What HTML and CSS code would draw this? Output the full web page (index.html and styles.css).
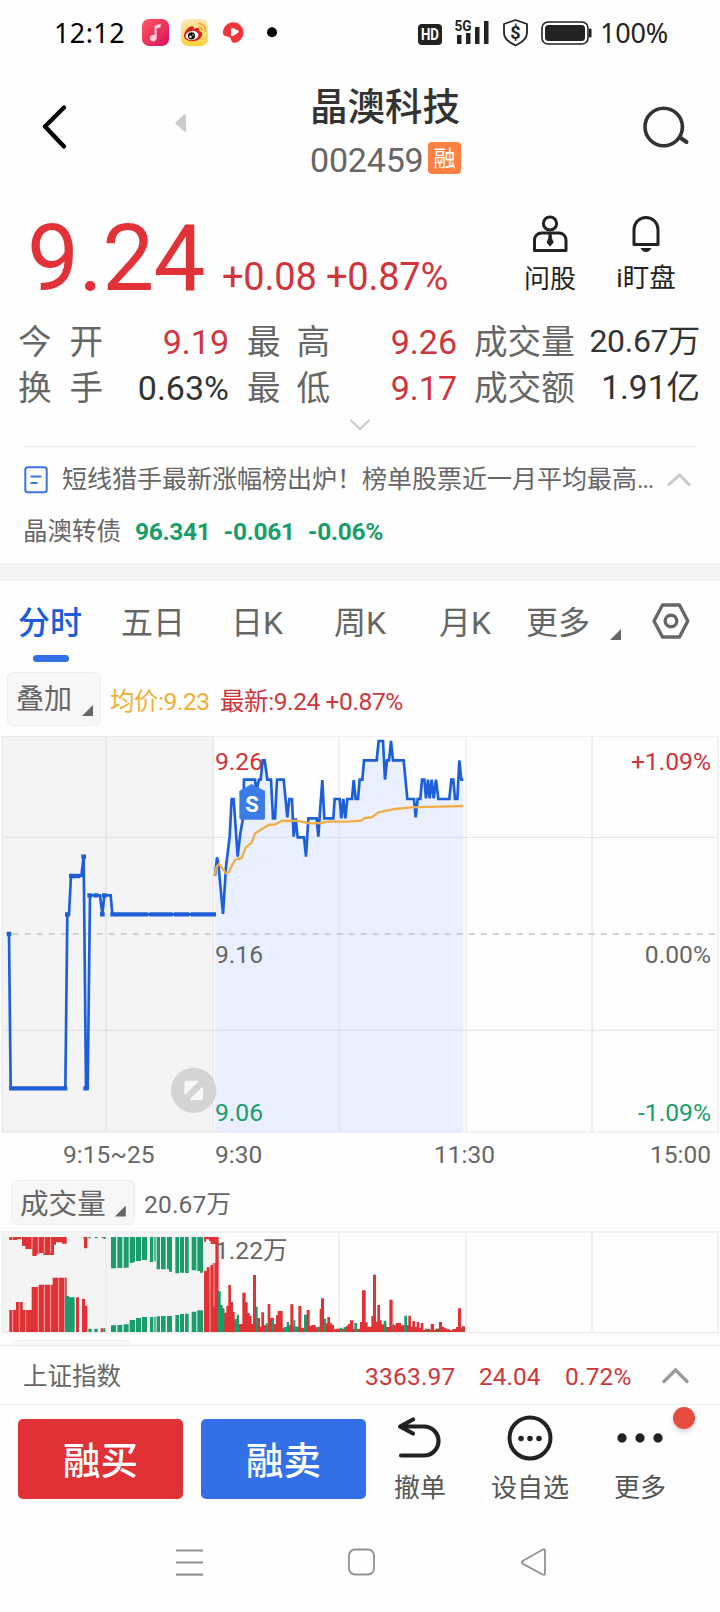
FILE: index.html
```html
<!DOCTYPE html>
<html lang="zh-CN">
<head>
<meta charset="utf-8">
<title>晶澳科技 002459</title>
<link rel="stylesheet" href="styles.css">
</head>
<body>
<div class="statusbar">
  <span class="clock">12:12</span>
  <svg class="app-icons" width="140" height="28" viewBox="0 0 140 28">
    <defs>
      <linearGradient id="pink" x1="0" y1="0" x2="1" y2="1"><stop offset="0" stop-color="#ff5a5f"/><stop offset="1" stop-color="#d80f5c"/></linearGradient>
      <linearGradient id="gold" x1="0" y1="0" x2="0" y2="1"><stop offset="0" stop-color="#fbe7b4"/><stop offset="1" stop-color="#ffd23a"/></linearGradient>
    </defs>
    <rect x="0" y="0" width="27" height="27" rx="7" fill="url(#pink)"/>
    <path d="M12.6 6.8l6-2v3.4l-4 1.4v9.5a3.3 3.3 0 1 1-2-3z" fill="#ffd3dc"/>
    <rect x="39" y="0" width="27" height="27" rx="7" fill="url(#gold)"/>
    <path d="M42 16c1-5 6-9.500 9-8.500 1.400.5.8 2 .7 2.500 3-1.500 6.500-1.400 5.500 2 3.500 1 3.500 3.500 2 6-2 3.200-6 4.500-9.800 4.200C45 21.800 41.500 20 42 16z" fill="#dc1f1b"/>
    <ellipse cx="50" cy="16.500" rx="6.500" ry="4.600" fill="#fff" transform="rotate(-8 50 16.500)"/>
    <circle cx="49.500" cy="16.800" r="3.600" fill="#111"/><circle cx="48.500" cy="17.800" r="1.200" fill="#fff"/><circle cx="51" cy="16" r=".7" fill="#fff"/>
    <path d="M57 4.500a7 7 0 0 1 6.500 7.500M57.500 8a3.600 3.600 0 0 1 2.700 3.300" fill="none" stroke="#f19a25" stroke-width="1.600" stroke-linecap="round"/>
    <path d="M81 14.500A10.300 10.300 0 1 1 96.500 22.400Q93 24.500 91 23.500C88.800 22.500 89.500 19.500 87.500 18.300 85 17 81.500 17.500 81 14.500z" fill="#f5333b"/>
    <path d="M89 10.500q0-2 2-1.500l5 2.500q1.500 1 0 2.200l-5 3.300q-2 1-2-1z" fill="#fff"/>
    <circle cx="130" cy="13.300" r="5" fill="#000"/>
  </svg>
  <svg class="sys-icons" width="178" height="30" viewBox="0 0 178 30">
    <rect x="0" y="6" width="24" height="21" rx="4" fill="#222"/>
    <text x="3" y="21.800" class="hd" textLength="18" lengthAdjust="spacingAndGlyphs">HD</text>
    <text x="36.500" y="13" class="fiveg" textLength="17" lengthAdjust="spacingAndGlyphs">5G</text>
    <path d="M39 17h4.500v9H39zM48 15h4.500v11H48zM57 9h4.500v17H57zM66 3h4.500v23H66z" fill="#222"/>
    <path d="M97.500 2l11.500 4v9c0 6-5 9.500-11.500 12.500C91 24.500 86 21 86 15V6z" fill="none" stroke="#222" stroke-width="1.800" stroke-linejoin="round"/>
    <text x="97.500" y="20.500" text-anchor="middle" class="dollar">$</text>
    <rect x="124" y="4" width="46" height="22" rx="6" fill="none" stroke="#222" stroke-width="1.600"/>
    <rect x="127" y="7" width="40" height="16" rx="3.500" fill="#222"/>
    <path d="M171.500 11h1.500v8h-1.500z" fill="#222" stroke="#222"/>
  </svg>
  <span class="battery">100%</span>
</div>

<header class="header">
  <svg class="back" width="30" height="50" viewBox="0 0 30 50"><path d="M24 5.500L5 24.500l19 20" fill="none" stroke="#000" stroke-width="4.400" stroke-linecap="round" stroke-linejoin="round"/></svg>
  <svg class="prev" width="12" height="18" viewBox="0 0 12 18"><path d="M0 9L9 .5Q11 0 11 2v14q0 2-2 1.500z" fill="#ccc"/></svg>
  <div class="title">
    <h1>晶澳科技</h1>
    <div class="code"><span>002459</span><b>融</b></div>
  </div>
  <svg class="search" width="48" height="48" viewBox="0 0 48 48"><circle cx="21.700" cy="23" r="18.700" fill="none" stroke="#333" stroke-width="3.600"/><path d="M38 33.500l6.500 4.500" stroke="#333" stroke-width="4" stroke-linecap="round"/></svg>
</header>

<section class="quote">
  <div class="price">9.24</div>
  <div class="change">+0.08 +0.87%</div>
  <div class="tool ask">
    <svg width="36" height="40" viewBox="0 0 36 40" fill="none" stroke="#222" stroke-width="3"><circle cx="18" cy="9.500" r="6.600"/><path d="M2.500 36.500V26a7 7 0 0 1 7-7H27a7 7 0 0 1 7 7v10.500z" stroke-linejoin="round"/><path d="M16.500 20h3.200l.2 4 1.800 4.500L18 32.500 14.600 28.500l1.700-4.500z" fill="#222" stroke="none"/></svg>
    <span>问股</span>
  </div>
  <div class="tool watch">
    <svg width="36" height="40" viewBox="0 0 36 40" fill="none" stroke="#222" stroke-width="3"><path d="M6 30.500V15.500a12 12 0 0 1 24 0v15z" stroke-linejoin="round"/><path d="M12.500 34h11q-2 4-5.500 4t-5.500-4z" fill="#222" stroke="none"/></svg>
    <span>i盯盘</span>
  </div>
</section>

<section class="stats">
  <div class="row">
    <div class="cell c1"><span class="lab sp">今开</span><span class="up">9.19</span></div>
    <div class="cell c2"><span class="lab sq">最高</span><span class="up">9.26</span></div>
    <div class="cell c3"><span class="lab">成交量</span><span class="small">20.67万</span></div>
  </div>
  <div class="row">
    <div class="cell c1"><span class="lab sp">换手</span><span>0.63%</span></div>
    <div class="cell c2"><span class="lab sq">最低</span><span class="up">9.17</span></div>
    <div class="cell c3"><span class="lab">成交额</span><span class="amount">1.91亿</span></div>
  </div>
  <svg class="expand" width="24" height="14" viewBox="0 0 24 14"><path d="M2.500 2L12 11l9.500-9" fill="none" stroke="#c8c8c8" stroke-width="2"/></svg>
</section>

<section class="news">
  <svg width="24" height="28" viewBox="0 0 24 28" fill="none" stroke="#3b74de" stroke-width="2"><rect x="1.300" y="1.300" width="21.400" height="25" rx="2.500"/><path d="M6.500 10.500h11M6.500 17h7"/></svg>
  <span class="headline">短线猎手最新涨幅榜出炉！榜单股票近一月平均最高<span class="dots">...</span></span>
  <svg class="fold" width="24" height="14" viewBox="0 0 24 14"><path d="M2 11.500L12.500 2 22 11.500" fill="none" stroke="#c8c8c8" stroke-width="3" stroke-linecap="round"/></svg>
</section>
<section class="bond"><span class="name">晶澳转债</span><b>96.341</b><b>-0.061</b><b>-0.06%</b></section>
<div class="band"></div>

<nav class="tabs">
  <span class="tab t1 active">分时</span><span class="tab t2">五日</span><span class="tab t3">日K</span><span class="tab t4">周K</span><span class="tab t5">月K</span><span class="tab t6">更多</span>
  <i class="corner"></i>
  <svg class="gear" width="40" height="38" viewBox="0 0 40 38" fill="none" stroke="#666" stroke-width="3.400"><path d="M11.500 3h17l8.300 16-8.300 16h-17L3 19z" stroke-linejoin="round"/><circle cx="20" cy="19" r="5.800"/></svg>
</nav>

<div class="legend">
  <span class="picker overlay">叠加<i class="corner"></i></span>
  <span class="avg">均价:9.23</span>
  <span class="last">最新:9.24 +0.87%</span>
</div>

<svg class="chart" width="720" height="400" viewBox="0 0 2160 1200">
  <path d="M7 0H640V1188H7z" fill="#f4f4f4"/>
  <path d="M645 1188V420L651 364 655 382 669 534 678 392 689 302 695 189H701L713 362 721 292 729 247 732 131H765L770 172 773 147 777 131H782L788 73H794L802 131H813L819 247H825L831 131H851L862 244 868 189H876L881 302 887 247 893 304H912L918 362 925 247H950L955 302 961 212 967 132 973 247H1000L1004 189H1019L1024 247 1030 189 1036 247 1042 189H1056L1061 132 1067 189H1074L1079 131H1087L1092 73H1130L1136 15H1149L1155 131 1161 73H1167L1173 15 1179 73H1211L1222 189H1242L1247 244 1253 189H1261L1266 131H1273L1278 187 1284 131 1289 187 1295 131 1301 187 1308 131 1315 189H1348L1354 131H1360L1365 189H1372L1378 73 1384 131H1390V1188z" fill="#eaf0ff"/>
  <path d="M7 0H2154V1188H7zM318 0V1188M640 0V1188M1017 0V1188M1398 0V1188M1776 0V1188" fill="none" stroke="#c6cbd2" stroke-opacity=".3" stroke-width="5"/>
  <path d="M12 304H2150M12 883H2150" stroke="#c6cbd2" stroke-opacity=".5" stroke-width="3"/>
  <path d="M38 594H2150" stroke="#c2c4ca" stroke-width="5" stroke-dasharray="18 18"/>
  <text x="645" y="102" class="axis up">9.26</text>
  <text x="645" y="680" class="axis">9.16</text>
  <text x="645" y="1154" class="axis down">9.06</text>
  <text x="2133" y="102" class="axis up" text-anchor="end">+1.09%</text>
  <text x="2133" y="680" class="axis" text-anchor="end">0.00%</text>
  <text x="2133" y="1154" class="axis down" text-anchor="end">-1.09%</text>
  <g fill="none" stroke="#1c5fd9" stroke-width="8">
    <path d="M27 594L32 1057H196L202 535H207L213 420H244L251 362 258 1057H263L270 478H300L307 535 313 478H332L337 535H648"/>
    <path d="M20 594H34M28 1057H202M195 535H210M207 420H240M244 362H258M250 1057H266M262 478H276M281 478H295M300 535H314M306 478H320M331 535H444M448 535H518M522 535H568M572 535H648" stroke-width="13"/>
    <path d="M645 420L651 364 655 382 669 534 678 392 689 302 695 189H701L713 362 721 292 729 247 732 131H765L770 172 773 147 777 131H782L788 73H794L802 131H813L819 247H825L831 131H851L862 244 868 189H876L881 302 887 247 893 304H912L918 362 925 247H950L955 302 961 212 967 132 973 247H1000L1004 189H1019L1024 247 1030 189 1036 247 1042 189H1056L1061 132 1067 189H1074L1079 131H1087L1092 73H1130L1136 15H1149L1155 131 1161 73H1167L1173 15 1179 73H1211L1222 189H1242L1247 244 1253 189H1261L1266 131H1273L1278 187 1284 131 1289 187 1295 131 1301 187 1308 131 1315 189H1348L1354 131H1360L1365 189H1372L1378 73 1384 131H1390"/>
  </g>
  <path d="M643 420L650 392 657 384 667 397 678 412 687 407 695 390 705 372 713 369 725 366 737 334 755 320 765 292 785 280 805 267 825 265 845 255 885 254 910 258 930 262 960 261 985 257H1045L1083 254 1095 246 1115 244 1135 229 1160 224 1185 219 1235 214 1315 212 1390 210" fill="none" stroke="#f0ae48" stroke-width="7" stroke-linejoin="round"/>
  <path d="M718 165L755 144 795 165V245Q795 251 789 251H724Q718 251 718 245z" fill="#3d7ce6"/>
  <text x="756" y="228" class="sell" text-anchor="middle">S</text>
  <circle cx="581" cy="1063" r="68" fill="#d4d4d4"/>
  <path d="M558 1036H593L555 1073V1039Q555 1036 558 1036zM607 1055V1087Q607 1091 603 1091H571z" fill="#f8f8f8" stroke="#f8f8f8" stroke-width="4" stroke-linejoin="round"/>
</svg>

<div class="times"><span class="h1">9:15~25</span><span class="h2">9:30</span><span class="h3">11:30</span><span class="h4">15:00</span></div>

<div class="volhead"><span class="picker volume">成交量<i class="corner"></i></span><span class="total">20.67万</span></div>

<svg class="vol" width="720" height="105" viewBox="0 270 2160 315">
  <path d="M7 276H640V578H7z" fill="#f4f4f4"/>
  <path d="M7 276H2154V578H7zM318 276V578M640 276V578M1017 276V578M1398 276V578M1776 276V578" fill="none" stroke="#eee" stroke-width="5"/>
  <path d="M28 576V510H48V486H68V510H95V441H116V434H158V413H200V576zM228 576V472H237V576zM246 576V477H255V497H262V576zM302 576V565H310V576zM612 576V392H620V382H631V375H638V370H646V291H656V576zM28 291V300H52V297H64V291zM66 291V318H76V327H95V291zM97 291V348H110V343H118V339H130V345H162V314H168V307H186V311H200V291zM250 291V296H252V325H262V291zM305 291V294H310V291zM612 291V305H618V298H627V303H632V312H646V291z" fill="#e03135"/>
  <path transform="translate(600 0)" fill="#e03135" d="M54 576V505H73V518H79V497H85V435H93V486H99V516H104V540H117V552H127V458H137V487H143V519H149V527H155V552H159V405H168V534H180V560H184V517H192V556H203V492H211V534H222V552H228V526H233V513H248V563H267V555H271V493H280V560H295V498H304V563H316V524H320V510H329V558H334V555H347V562H359V506H363V475H372V550H382V531H390V548H395V554H402V568H408V566H438V557H444V552H450V541H460V566H480V546H486V451H497V547H503V560H514V528H519V404H528V545H532V495H540V541H545V553H559V561H568V479H578V556H587V549H603V556H625V527H633V560H637V543H645V560H650V546H658V563H662V549H670V570H692V552H702V570H710V566H717V546H726V560H733V565H740V568H750V571H757V567H768V561H774V505H783V565H786V559H795V576z"/>
  <path fill="#189d6b" d="M198 576V468H207V472H224V576zM265 576V566H275V576zM283 576V566H293V576zM310 576V565H316V576zM265 291V295H272V291zM284 291V295H293V291zM310 291V297H317V291zM333 291V385H348V291zM352 291V384H367V291zM371 291V383H386V291zM389 291V369H400V366H405V291zM408 291V363H423V291zM426 291V360H441V291zM450 291V366H460V291zM463 291V364H467V291zM470 291V388H480V291zM483 291V388H497V291zM501 291V388H507V395H516V291zM526 291V400H537V291zM540 291V398H552V291zM555 291V399H566V291zM575 291V391H589V291zM592 291V393H600V398H609V291zM333 576V556H348V576zM352 576V555H367V576zM371 576V553H386V576zM389 576V540H405V576zM408 576V534H423V576zM426 576V531H441V576zM450 576V531H460V576zM463 576V530H467V576zM470 576V529H480V576zM483 576V528H497V576zM501 576V528H516V576zM526 576V525H537V576zM540 576V522H552V576zM555 576V521H566V576zM575 576V515H589V576zM592 576V511H609V576z"/>
  <path transform="translate(600 0)" fill="#189d6b" d="M54 576V453H62V495H68V505H73V576zM104 576V537H110V524H117V576zM168 576V500H173V576zM197 576V550H203V576zM216 576V540H222V576zM252 576V561H260V546H267V576zM280 576V541H286V560H295V576zM312 576V524H320V576zM353 576V560H359V576zM372 576V536H378V576zM420 576V563H426V576zM431 576V561H438V576zM463 576V549H471V576zM551 576V542H559V576zM578 576V551H582V576zM613 576V527H621V576zM783 576V564H787V576z"/>
  <path d="M675 566h15v10h-15zM706 566h12v10h-12z" fill="#8a5a3b" transform="translate(600 0)"/>
  <path d="M38 291V300M38 511V576M58 487V576M77 511V576M115 291V345M115 440V576M133 291V340M133 435V576M152 291V340M152 435V576M176 415V576M194 415V576M630 382V576M642 372V500" stroke="#f7a9aa" stroke-width="3"/>
  <text x="645" y="357" class="axis">1.22万</text>
</svg>

<div class="peek"><span></span></div>

<section class="index">
  <span class="name">上证指数</span><span class="n1">3363.97</span><span class="n2">24.04</span><span class="n3">0.72%</span>
  <svg width="30" height="18" viewBox="0 0 30 18"><path d="M3 14.500L14.500 3 26 14.500" fill="none" stroke="#999" stroke-width="3.400" stroke-linecap="round"/></svg>
</section>

<footer class="actions">
  <button class="buy">融买</button>
  <button class="sellbtn">融卖</button>
  <div class="act undo">
    <svg width="48" height="48" viewBox="0 0 48 48" fill="none" stroke="#222" stroke-width="4.200" stroke-linecap="round" stroke-linejoin="round"><path d="M17 4.500L4 11.500l13 7M5 11.500h23a14.500 14.500 0 0 1 0 29H5"/></svg>
    <span>撤单</span>
  </div>
  <div class="act fav">
    <svg width="48" height="48" viewBox="0 0 48 48"><circle cx="24" cy="23" r="20.500" fill="none" stroke="#222" stroke-width="4"/><path d="M15 23.500h.01M24 23.500h.01M33 23.500h.01" stroke="#222" stroke-width="5.600" stroke-linecap="round"/></svg>
    <span>设自选</span>
  </div>
  <div class="act more">
    <svg width="48" height="48" viewBox="0 0 48 48"><path d="M6 23h.01M24 23h.01M42 23h.01" stroke="#222" stroke-width="9.300" stroke-linecap="round"/></svg>
    <span>更多</span><i class="dot"></i>
  </div>
</footer>

<div class="sysnav">
  <svg width="720" height="40" viewBox="0 0 720 40" fill="none" stroke="#929292" stroke-width="2.200"><path d="M176 8.500h27M176 20.500h27M176 32.700h27"/><rect x="349" y="7.500" width="25" height="25" rx="6" stroke-width="1.800"/><path d="M543 7.500l-20 11.200q-2.500 1.600 0 3.200L542.500 32.500q2.500 1 2.500-1.500V9.500q0-3-2-2z" stroke-width="1.800" stroke-linejoin="round"/></svg>
</div>
</body>
</html>
```

FILE: styles.css
```css
* { box-sizing: border-box; }
body {
  margin: 0; width: 720px; height: 1612px; overflow: hidden;
  background: #fefefe; color: #333;
  font-family: Roboto, "Noto Sans CJK SC", sans-serif;
}
svg { display: block; flex: none; }
span, b, h1 { white-space: nowrap; }

.statusbar { height: 66px; display: flex; align-items: center; padding-left: 54px; font: 27px/30px "Noto Sans", sans-serif; color: #111; }
.clock { width: 88px; color: #000; letter-spacing: .4px; }
.app-icons { width: 140px; }
.sys-icons { margin-left: 136px; }
.battery { margin-left: 4px; color: #222; letter-spacing: -.2px; }
.hd { font: bold 17px Roboto, sans-serif; fill: #fff; }
.fiveg { font: bold 15px Roboto, sans-serif; fill: #222; }
.dollar { font: bold 18px Roboto, sans-serif; fill: #222; }

.header { height: 124px; display: flex; align-items: flex-start; }
.back { margin: 36px 0 0 40px; }
.prev { margin: 48px 0 0 105px; }
.title { margin-left: 123px; width: 200px; }
h1 { margin: 19px 0 0 0; font-size: 37.500px; line-height: 44px; font-weight: 500; color: #333; }
.code { display: flex; align-items: center; height: 44px; margin-top: 9px; font-size: 34px; line-height: 44px; color: #666; }
.code span { width: 118px; letter-spacing: -.2px; }
.code b { width: 33px; height: 32px; margin-top: -5px; border-radius: 4px; background: #ff8040; color: #fff; font-size: 22px; line-height: 34px; font-weight: 400; text-align: center; }
.search { margin: 38px 0 0 132px; }

.quote { height: 124px; display: flex; align-items: flex-start; color: #e03237; }
.price { width: 195px; margin-left: 27px; font-size: 92.500px; line-height: 100px; padding-top: 19px; letter-spacing: -.6px; }
.change { width: 290px; font-size: 38px; line-height: 44px; padding-top: 65px; color: #cf353b; letter-spacing: -.2px; }
.tool { width: 80px; margin-top: 24px; display: flex; flex-direction: column; align-items: center; color: #222; font-size: 26px; line-height: 32px; gap: 9px; }
.ask { margin-left: -2px; }
.watch { margin-left: 16px; gap: 8px; font-size: 26.500px; }

.stats { height: 132px; padding: 5px 20px 0 18px; }
.row { display: flex; gap: 18px; height: 46px; align-items: center; font-size: 34px; line-height: 46px; }
.cell { display: flex; justify-content: space-between; }
.c1 { width: 211px; } .c2 { width: 210px; } .c3 { width: 225px; }
.lab { color: #666; font-size: 33.600px; padding-top: 1px; margin-bottom: -1px; }
.c3 .lab { margin-left: -1px; }
.sp { letter-spacing: 18px; } .sq { letter-spacing: 16px; }
.lab.sp, .lab.sq { margin-right: -18px; }
.up { color: #cf353b; }
.small { font-size: 32px; letter-spacing: -.3px; margin-top: -1px; }
.amount { font-size: 33.500px; }
.expand { margin: 7px auto 0 330px; }

.news { height: 66px; margin: 0 23px; border-top: 1px solid #ececec; display: flex; align-items: center; color: #666; font-size: 25px; line-height: 32px; padding-left: 1px; }
.headline { width: 592px; margin-left: 14px; padding-top: 1px; }
.dots { letter-spacing: -1.200px; }
.fold { margin-left: 13px; }
.bond { height: 51px; padding-left: 23px; display: flex; align-items: center; color: #189d6b; font-size: 24.500px; line-height: 32px; padding-bottom: 11px; }
.bond .name { color: #666; width: 112px; }
.bond b { font-weight: 700; letter-spacing: -.3px; margin-right: 13px; }
.band { height: 18px; background: #f4f4f4; }

.tabs { height: 91px; display: flex; font-size: 32px; line-height: 44px; color: #666; padding: 20px 0 0 18px; }
.tab { display: block; }
.active { color: #1c5cd8; font-weight: 500; position: relative; height: 61px; }
.active::after { content: ""; position: absolute; left: 15px; top: 54px; width: 36px; height: 7px; border-radius: 4px; background: #3470e6; }
.t1 { width: 103px; } .t2 { width: 110px; } .t3 { width: 103px; } .t4 { width: 105px; } .t5 { width: 87px; } .t6 { width: 84px; }
.corner { display: block; width: 11px; height: 11px; background: #666; clip-path: polygon(100% 0, 100% 100%, 0 100%); }
.tabs .corner { margin-top: 28px; }
.gear { margin: 1px 0 0 30px; }

.legend { height: 58px; display: flex; align-items: center; padding: 0 0 4px 7px; font-size: 24.500px; line-height: 34px; }
.picker { display: flex; align-items: center; background: #f7f7f7; border: 1px solid #eee; border-radius: 6px; color: #666; }
.overlay { width: 94px; height: 54px; padding: 2px 0 0 8px; font-size: 28px; }
.overlay .corner { margin: 21px 0 0 10px; }
.avg { margin-left: 9px; width: 110px; color: #f0ae35; padding-top: 5px; letter-spacing: -.45px; }
.last { color: #cf353b; padding-top: 5px; letter-spacing: -.4px; }

.chart { margin-top: 6px; }
.axis { font: 74px Roboto, "Noto Sans CJK SC", sans-serif; fill: #666; }
.axis.up { fill: #cf353b; } .axis.down { fill: #189d6b; }
.sell { font: bold 66px Roboto, sans-serif; fill: #fff; }

.times { height: 43px; display: flex; font-size: 24.500px; line-height: 37px; color: #666; }
.h1 { margin-left: 63px; width: 152px; } .h2 { width: 219px; } .h3 { width: 216px; }

.volhead { height: 51px; display: flex; align-items: flex-start; padding: 1px 0 0 11px; font-size: 24.500px; line-height: 49px; color: #666; gap: 9px; }
.total { letter-spacing: .2px; }
.volume { width: 124px; height: 45px; padding: 3px 0 0 8px; font-size: 28.600px; line-height: 42px; }
.volume .corner { margin: 14px 0 0 9px; }

.peek { height: 10px; padding: 5px 0 0 11px; overflow: hidden; }
.peek span { display: block; width: 120px; height: 20px; background: #f7f7f7; border: 1px solid #eee; border-radius: 6px; }

.index { height: 60px; border-top: 1px solid #ececec; border-bottom: 1px solid #ececec; display: flex; align-items: center; padding-left: 23px; color: #cf353b; font-size: 24.500px; line-height: 32px; padding-top: 3px; }
.index .name { width: 342px; color: #666; padding-top: 1px; }
.n1 { width: 114px; letter-spacing: .2px; } .n2 { width: 86px; } .n3 { width: 96px; letter-spacing: .2px; }
.index svg { margin-top: -2px; }

.actions { height: 125px; padding: 14px 0 0 18px; display: flex; align-items: flex-start; }
button { width: 165px; height: 80px; border: 0; border-radius: 5px; margin: 0 18px 0 0; padding: 5px 0 0; color: #fff; font: 500 37.500px/75px Roboto, "Noto Sans CJK SC", sans-serif; }
.buy { background: #e03137; } .sellbtn { background: #3370e7; }
.act { display: flex; flex-direction: column; align-items: center; color: #555; font-size: 26px; line-height: 32px; margin-top: -4px; gap: 9px; position: relative; width: 80px; }
.undo { margin-left: -4px; } .fav { margin-left: 30px; } .more { margin-left: 30px; }
.dot { position: absolute; left: 73px; top: -8px; width: 22px; height: 22px; border-radius: 50%; background: #e74c3e; box-shadow: 0 3px 5px rgba(0,0,0,.16); }
.sysnav { padding-top: 12px; }
```
